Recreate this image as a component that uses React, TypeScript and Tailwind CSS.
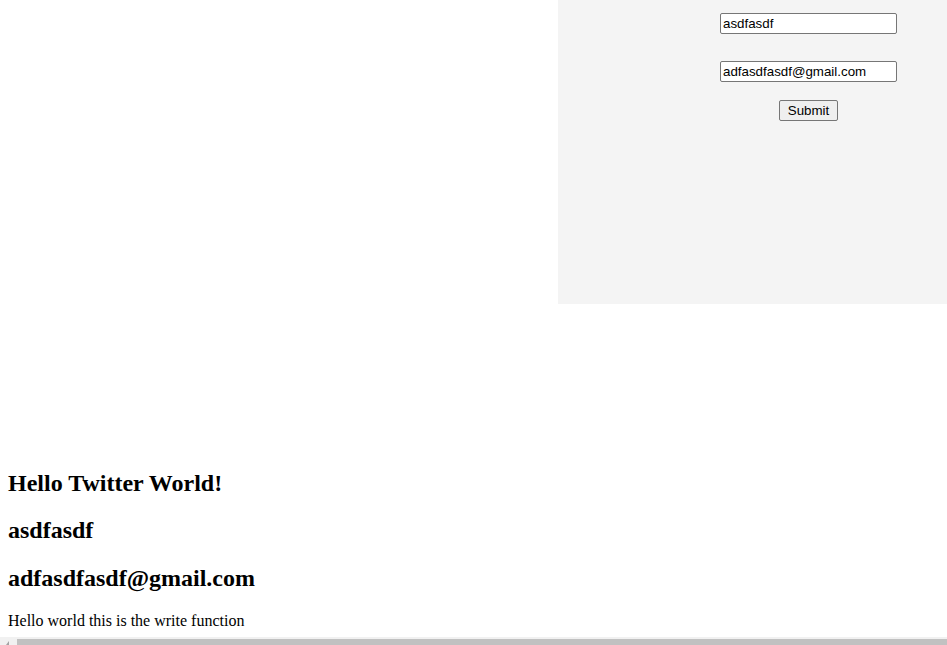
import React from "react";

export default function App() {
  const serif = { fontFamily: '"Liberation Serif", "Times New Roman", serif' };
  const sans = '[font-family:"Liberation_Sans",Arial,sans-serif]';
  return (
    <div className="min-h-[645px] bg-white text-black [font-family:'Liberation_Serif',serif]">
      <div className="flex">
        <div className="w-[558px] shrink-0" />
        <div className="flex-1 h-[304px] bg-[#f4f4f4] pl-[162px] pt-[13px]">
          <div className="w-[177px] flex flex-col items-center">
            <input
              defaultValue="asdfasdf"
              className={`w-[177px] h-[21px] bg-white border border-[#767676] rounded-[2px] px-[2px] text-[13.333px] text-black outline-none ${sans}`}
            />
            <input
              defaultValue="adfasdfasdf@gmail.com"
              className={`mt-[27px] w-[177px] h-[21px] bg-white border border-[#767676] rounded-[2px] px-[2px] text-[13.333px] text-black outline-none ${sans}`}
            />
            <button
              className={`mt-[18px] h-[21px] w-[59px] bg-[#efefef] border border-[#767676] rounded-[2px] text-[13.333px] text-black leading-none ${sans}`}
            >
              Submit
            </button>
          </div>
        </div>
      </div>
      <div className="h-[146px]" />
      <div className="px-[8px]" style={serif}>
        <h2 className="text-[24px] font-bold leading-[27.6px] my-[19.92px]">Hello Twitter World!</h2>
        <h2 className="text-[24px] font-bold leading-[27.6px] my-[19.92px]">asdfasdf</h2>
        <h2 className="text-[24px] font-bold leading-[27.6px] my-[19.92px]">adfasdfasdf@gmail.com</h2>
        <p className="text-[16px] leading-[18.4px] my-[16px]">Hello world this is the write function</p>
      </div>
      <div className="fixed bottom-0 left-0 w-[947px] h-[8px] bg-[#f1f1f1]">
        <div className="absolute left-[17px] top-[2px] right-0 h-[6px] bg-[#c1c1c1]" />
        <div className="absolute left-[6px] top-[4px] w-0 h-0 border-l-[3px] border-l-transparent border-b-[4px] border-b-[#a3a3a3]" />
      </div>
    </div>
  );
}
